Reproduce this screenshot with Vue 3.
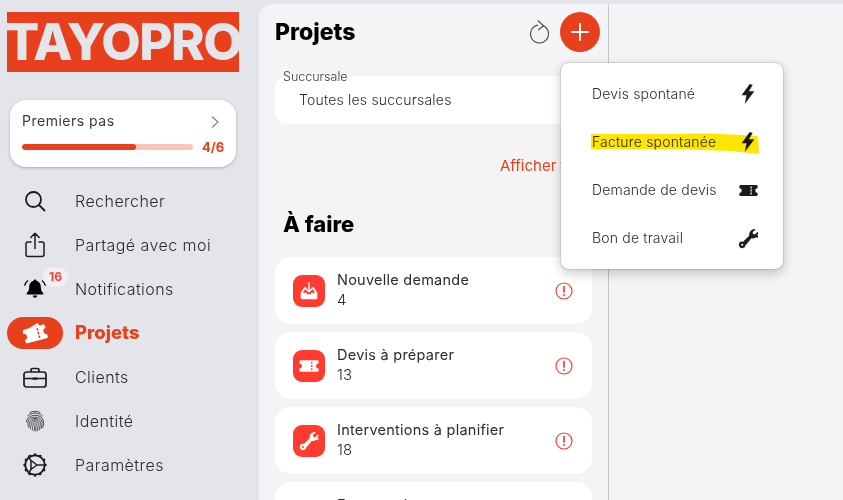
<script setup>
const nav = [
  { label: 'Rechercher', icon: 'search' },
  { label: 'Partagé avec moi', icon: 'share' },
  { label: 'Notifications', icon: 'bell', badge: 16 },
  { label: 'Projets', icon: 'ticket', active: true },
  { label: 'Clients', icon: 'case' },
  { label: 'Identité', icon: 'finger' },
  { label: 'Paramètres', icon: 'gear' }
]
const tasks = [
  { title: 'Nouvelle demande', count: 4, icon: 'inbox' },
  { title: 'Devis à préparer', count: 13, icon: 'ticket' },
  { title: 'Interventions à planifier', count: 18, icon: 'wrench' },
  { title: 'Factures à envoyer', count: 6, icon: 'inbox', pale: true }
]
const menu = [
  { label: 'Devis spontané', icon: 'bolt' },
  { label: 'Facture spontanée', icon: 'bolt', marked: true },
  { label: 'Demande de devis', icon: 'ticket' },
  { label: 'Bon de travail', icon: 'wrench' }
]
const gearTeeth = Array.from({ length: 12 }, (_, i) => i * 30)
</script>

<template>
  <div class="app">
    <svg width="0" height="0" class="defs">
      <symbol id="i-ticket" viewBox="0 0 24 16">
        <path fill="currentColor" fill-rule="evenodd" d="M2 1h20a1.500 1.500 0 0 1 1.500 1.500V5a3 3 0 0 0 0 6v2.500A1.500 1.500 0 0 1 22 15H2a1.500 1.500 0 0 1-1.500-1.500V11a3 3 0 0 0 0-6V2.500A1.500 1.500 0 0 1 2 1zM14.500 3v2.400h1.600V3zm0 3.800v2.400h1.600V6.800zm0 3.800V13h1.600v-2.400z"/>
      </symbol>
      <symbol id="i-wrench" viewBox="0 0 24 24">
        <circle cx="4.800" cy="19.200" r="2.500" fill="none" stroke="currentColor" stroke-width="2.600"/>
        <path fill="currentColor" d="M6 15.300 12.800 8.800C12.400 6.400 13.300 3.900 15.300 2.500 16.900 1.400 18.700 1 20.200 1.400L16.800 4.800l.3 2.100 2.200.5 3.100-3.200 1.300 1.700-2 2.100 1.900 1.100-.9 1.900-2.300-.5c-1.400 1.300-3.200 1.700-5 1.300L8.600 20c-.2-2-1-3.700-2.600-4.700z"/>
      </symbol>
      <symbol id="i-bolt" viewBox="0 0 14 20">
        <path fill="currentColor" d="M8.700 0 .6 11.200h4.900L3.700 20l9.700-12.800H7.900L11.700 1z"/>
      </symbol>
      <symbol id="i-inbox" viewBox="0 0 24 24">
        <path fill="currentColor" d="M6.500 7.500H9v2H7.600l-3 4.500H9l1 2h4l1-2h4.400l-3-4.500H15v-2h2.500L22 14v6a2 2 0 0 1-2 2H4a2 2 0 0 1-2-2v-6z"/>
        <path fill="none" stroke="currentColor" stroke-width="1.700" stroke-linecap="round" stroke-linejoin="round" d="M12 2v11M8.500 9.500 12 13l3.500-3.500"/>
      </symbol>
    </svg>

    <aside class="side">
      <div class="logo"><span>TAYOPRO</span></div>

      <div class="steps">
        <div class="steps-top">
          <span>Premiers pas</span>
          <svg class="chev" width="10" height="14" viewBox="0 0 10 14"><path d="M2 1.500 8 7l-6 5.500" fill="none" stroke="#85858a" stroke-width="1.200"/></svg>
        </div>
        <div class="steps-bottom">
          <div class="track"><div class="fill"></div></div>
          <b>4/6</b>
        </div>
      </div>

      <nav class="nav">
        <div v-for="item in nav" :key="item.label" class="nav-item" :class="{ active: item.active }">
          <div class="nav-icon">
            <svg v-if="item.icon === 'search'" width="22" height="22" viewBox="0 0 22 22" fill="none" stroke="#1c1c1e" stroke-width="1.800" stroke-linecap="round"><circle cx="9.500" cy="9.500" r="7.500"/><path d="m15 15 5.500 5.500"/></svg>
            <svg v-else-if="item.icon === 'share'" width="20" height="26" viewBox="0 0 20 26" fill="none" stroke="#1c1c1e" stroke-width="1.500" stroke-linecap="round" stroke-linejoin="round"><path d="M6 10H3a2 2 0 0 0-2 2v10.500a2 2 0 0 0 2 2h14a2 2 0 0 0 2-2V12a2 2 0 0 0-2-2h-3M10 16.500V1.500M5.800 5.500 10 1.300l4.200 4.200"/></svg>
            <svg v-else-if="item.icon === 'bell'" width="22" height="24" viewBox="0 0 22 22"><path fill="#000" d="M11 1.500c.8 0 1.400.6 1.400 1.300 2.900.7 4.300 3 4.400 5.900.1 3.700 1 5 2.400 6.300.5.500.2 1.500-.6 1.500H3.400c-.8 0-1.100-1-.6-1.500 1.400-1.300 2.300-2.600 2.400-6.300.1-2.900 1.500-5.200 4.400-5.900 0-.7.600-1.300 1.400-1.300zM8.800 17.500h4.400a2.200 2.200 0 0 1-4.400 0z"/><path fill="none" stroke="#000" stroke-width="1.100" stroke-linecap="round" d="M3.800 2.800C2 4.200 1 5.800.8 7.500M18.200 2.800c1.800 1.400 2.800 3 3 4.700"/></svg>
            <svg v-else-if="item.icon === 'ticket'" class="tilt" width="24" height="18" viewBox="0 0 24 18"><path fill="#fff" d="M5 3.500 17 0l1.200 3H7z"/><use href="#i-ticket" y="2" width="24" height="16"/></svg>
            <svg v-else-if="item.icon === 'case'" width="24" height="21" viewBox="0 0 24 21" fill="none" stroke="#1c1c1e" stroke-width="1.700"><rect x="1" y="5" width="22" height="15" rx="2.500"/><path d="M8 5V3a1.500 1.500 0 0 1 1.500-1.500h5A1.500 1.500 0 0 1 16 3v2M1 11.500h22"/><rect x="9.500" y="10.500" width="5" height="2.200" rx=".5" fill="#1c1c1e" stroke="none"/></svg>
            <svg v-else-if="item.icon === 'finger'" width="20" height="22" viewBox="0 0 20 22" fill="none" stroke="#3a3a3c" stroke-width=".9" stroke-linecap="round"><path d="M5 2.500c3-1.600 7-1.600 10 0"/><path d="M2.500 6c3.500-4 11.500-4 15 0"/><path d="M1.500 12c0-9 17-9 17 0 0 2 0 4-.8 5.500"/><path d="M3.500 17c-.5-2-.5-3.500-.5-5 0-6.500 14-6.500 14 0 0 2.500 0 4.500-1 6.500"/><path d="M5.500 19c-.5-2-.7-4-.7-7 0-4.500 10.400-4.500 10.400 0 0 3 0 5-1.200 8"/><path d="M8 20.500c-.8-2.500-1.200-5-1.200-8.500 0-3 6.400-3 6.400 0 0 3.500-.2 6-1.200 9"/><path d="M10 21c-.8-3-1.200-6-1.200-9 0-1.500 2.400-1.500 2.400 0 0 3 0 5.500-.6 8"/></svg>
            <svg v-else width="24" height="24" viewBox="0 0 24 24" fill="none" stroke="#1c1c1e"><circle cx="12" cy="12" r="9.700" stroke-width="1.800"/><g stroke-width="2.300"><path v-for="a in gearTeeth" :key="a" d="M12 .4v2.400" :transform="`rotate(${a} 12 12)`"/></g><path stroke-width="1.500" stroke-linejoin="round" d="M8 7.500 14 12l-6 4.500zM14 12h8M8 7.500 5 3.500M8 16.500l-3 4"/></svg>
            <span v-if="item.badge" class="badge">{{ item.badge }}</span>
          </div>
          <span class="nav-label">{{ item.label }}</span>
        </div>
      </nav>
    </aside>

    <main class="panel">
      <header class="head">
        <h1>Projets</h1>
        <svg class="refresh" width="22" height="24" viewBox="0 0 22 24" fill="none" stroke="#505052" stroke-width="1.200" stroke-linecap="round" stroke-linejoin="round"><path d="M8.500 5.200a9 9 0 1 0 6 .7"/><path d="M9 .8l5.500 5L9.500 9.800"/></svg>
        <button class="plus"><svg width="18" height="18" viewBox="0 0 18 18"><path d="M9 1v16M1 9h16" stroke="#fff" stroke-width="2" stroke-linecap="round"/></svg></button>
      </header>

      <div class="field">
        <label>Succursale</label>
        <span>Toutes les succursales</span>
      </div>

      <div class="show">Afficher tout</div>

      <h2>À faire</h2>

      <div class="tasks">
        <div v-for="t in tasks" :key="t.title" class="task">
          <div class="task-icon" :class="{ pale: t.pale }">
            <svg v-if="t.icon === 'ticket'" width="20" height="14"><use href="#i-ticket" width="20" height="14"/></svg>
            <svg v-else width="20" height="20"><use :href="`#i-${t.icon}`" width="20" height="20"/></svg>
          </div>
          <div class="task-text">
            <div class="task-title">{{ t.title }}</div>
            <div class="task-count">{{ t.count }}</div>
          </div>
          <svg class="alert" width="18" height="18" viewBox="0 0 18 18"><circle cx="9" cy="9" r="8" fill="none" stroke="#ff3b30" stroke-width="1.200"/><path d="M9 4.500v5.500" stroke="#ff3b30" stroke-width="1.700" stroke-linecap="round"/><circle cx="9" cy="13" r="1" fill="#ff3b30"/></svg>
        </div>
      </div>
    </main>

    <section class="detail"></section>

    <div class="popover">
      <div v-for="m in menu" :key="m.label" class="pop-row">
        <svg v-if="m.marked" class="marker" width="170" height="22" viewBox="0 0 170 22"><path fill="#ffe600" d="M0 2 60 2 120 1.500 167 4 168 22 140 19 80 17 0 17z"/></svg>
        <span class="pop-label">{{ m.label }}</span>
        <div class="pop-icon">
          <svg v-if="m.icon === 'bolt'" width="14" height="20"><use href="#i-bolt" width="14" height="20"/></svg>
          <svg v-else-if="m.icon === 'ticket'" width="19" height="13"><use href="#i-ticket" width="19" height="13"/></svg>
          <svg v-else width="21" height="21"><use href="#i-wrench" width="21" height="21"/></svg>
        </div>
      </div>
    </div>
  </div>
</template>

<style>
html, body { margin: 0; background: #e4e5eb; overflow: hidden; }
</style>

<style scoped>
.app {
  position: relative;
  display: flex;
  width: 843px;
  height: 500px;
  overflow: hidden;
  background: #e4e5eb;
  font-family: Inter, "Liberation Sans", sans-serif;
  color: #3a3a3c;
}
.defs { position: absolute; }
.side { width: 259px; flex: none; box-sizing: border-box; padding: 12px 0 0 7px; }
.logo {
  width: 232px;
  height: 60px;
  background: #e8401c;
  overflow: hidden;
  display: flex;
  align-items: center;
  justify-content: center;
}
.logo span {
  font-size: 51px;
  font-weight: 800;
  line-height: 60px;
  color: #e4e5eb;
  letter-spacing: -1.500px;
  white-space: nowrap;
}
.steps {
  width: 226px;
  height: 67px;
  margin: 28px 0 0 3px;
  box-sizing: border-box;
  padding: 10px 12px 0;
  background: #fff;
  border-radius: 16px;
  box-shadow: 0 1px 3px rgba(0, 0, 0, .25);
}
.steps-top {
  display: flex;
  justify-content: space-between;
  align-items: center;
  height: 20px;
  font-size: 14px;
  font-weight: 400;
  letter-spacing: .5px;
  color: #3a3a3c;
}
.chev { margin-right: 4px; margin-top: 4px; }
.steps-bottom { display: flex; align-items: center; gap: 9px; margin-top: 9px; }
.track { width: 171px; flex: none; height: 6px; border-radius: 3px; background: #f8c5ba; overflow: hidden; }
.fill { width: 114px; height: 6px; background: #e8401c; border-radius: 3px; }
.steps-bottom b { font-size: 13px; color: #e8401c; font-weight: 700; letter-spacing: 0; white-space: nowrap; }
.nav { margin-top: 12px; }
.nav-item { display: flex; align-items: center; height: 44px; }
.nav-icon {
  position: relative;
  width: 56px;
  height: 32px;
  border-radius: 16px;
  display: flex;
  align-items: center;
  justify-content: center;
  margin-right: 12px;
}
.nav-label { font-size: 16px; font-weight: 300; letter-spacing: .45px; color: #2c2c2e; }
.active .nav-icon { background: #e8401c; color: #fff; }
.active .nav-label { font-size: 18.500px; font-weight: 800; color: #e8401c; letter-spacing: 0; line-height: 20px; margin-top: -2px; }
.tilt { transform: rotate(-15deg); }
.badge {
  position: absolute;
  left: 36px;
  top: -6px;
  width: 25px;
  height: 20px;
  border-radius: 10px;
  background: #f0f0f4;
  color: #ff3b30;
  font-size: 12px;
  font-weight: 700;
  line-height: 20px;
  text-align: center;
}
.panel {
  width: 350px;
  flex: none;
  margin-top: 4px;
  box-sizing: border-box;
  padding: 8px 16px 0;
  background: #f4f4f7;
  border-top-left-radius: 14px;
  border-right: 1px solid #c6c6c9;
}
.head { display: flex; align-items: center; height: 40px; }
h1 { margin: 0; font-size: 23px; font-weight: 800; color: #000; flex: 1; }
.refresh { margin-right: 9px; }
.plus {
  width: 40px;
  height: 40px;
  padding: 0;
  border: 0;
  border-radius: 50%;
  background: #e8401c;
  display: flex;
  align-items: center;
  justify-content: center;
  margin-right: -8px;
}
.field {
  position: relative;
  height: 48px;
  margin: 24px 0 0 0;
  width: 317px;
  box-sizing: border-box;
  padding-left: 24px;
  padding-bottom: 2px;
  background: #fff;
  border-radius: 12px;
  display: flex;
  align-items: center;
  font-size: 14px;
  font-weight: 300;
  letter-spacing: .2px;
  color: #2c2c2e;
}
.field label {
  position: absolute;
  left: 8px;
  top: -7px;
  font-size: 12.500px;
  font-weight: 300;
  letter-spacing: 0;
  color: #3a3a3c;
}
.show {
  margin-top: 32px;
  padding-left: 225px;
  font-size: 15px;
  font-weight: 400;
  line-height: 20px;
  color: #e8401c;
  white-space: nowrap;
}
h2 { margin: 34px 0 0 8px; font-size: 22px; line-height: 28px; font-weight: 800; color: #000; }
.tasks { display: flex; flex-direction: column; gap: 8px; margin-top: 19px; width: 317px; }
.task {
  flex: none;
  height: 67px;
  box-sizing: border-box;
  display: flex;
  align-items: center;
  padding: 0 19px 0 18px;
  background: #fff;
  border-radius: 16px;
}
.task-icon {
  width: 32px;
  height: 32px;
  flex: none;
  border-radius: 9px;
  background: #ff3b30;
  color: #fff;
  display: flex;
  align-items: center;
  justify-content: center;
  margin-right: 12px;
}
.task-icon.pale { background: #ffa8a2; }
.task-text { flex: 1; margin-bottom: 2px; }
.task-title { font-size: 14.500px; line-height: 20px; letter-spacing: .25px; color: #2c2c2e; }
.task-count { font-size: 15px; line-height: 20px; font-weight: 300; color: #2c2c2e; }
.popover {
  position: absolute;
  left: 561px;
  top: 63px;
  width: 222px;
  height: 206px;
  box-sizing: border-box;
  padding: 6px 24px 8px 31px;
  background: #fff;
  border-radius: 8px;
  box-shadow: 0 0 2px rgba(0, 0, 0, .35), 0 4px 12px rgba(0, 0, 0, .22);
  display: flex;
  flex-direction: column;
}
.detail { flex: 1; background: #f4f4f7; margin-top: 4px; }
.pop-row {
  position: relative;
  height: 48px;
  display: flex;
  align-items: center;
  justify-content: space-between;
}
.pop-label { font-size: 14px; font-weight: 300; letter-spacing: .18px; color: #2c2c2e; }
.pop-icon { width: 20px; display: flex; justify-content: center; color: #1c1c1e; margin: 2px 1px 0 0; }
.marker { position: absolute; left: -1px; top: 15px; mix-blend-mode: multiply; z-index: 1; }
</style>
